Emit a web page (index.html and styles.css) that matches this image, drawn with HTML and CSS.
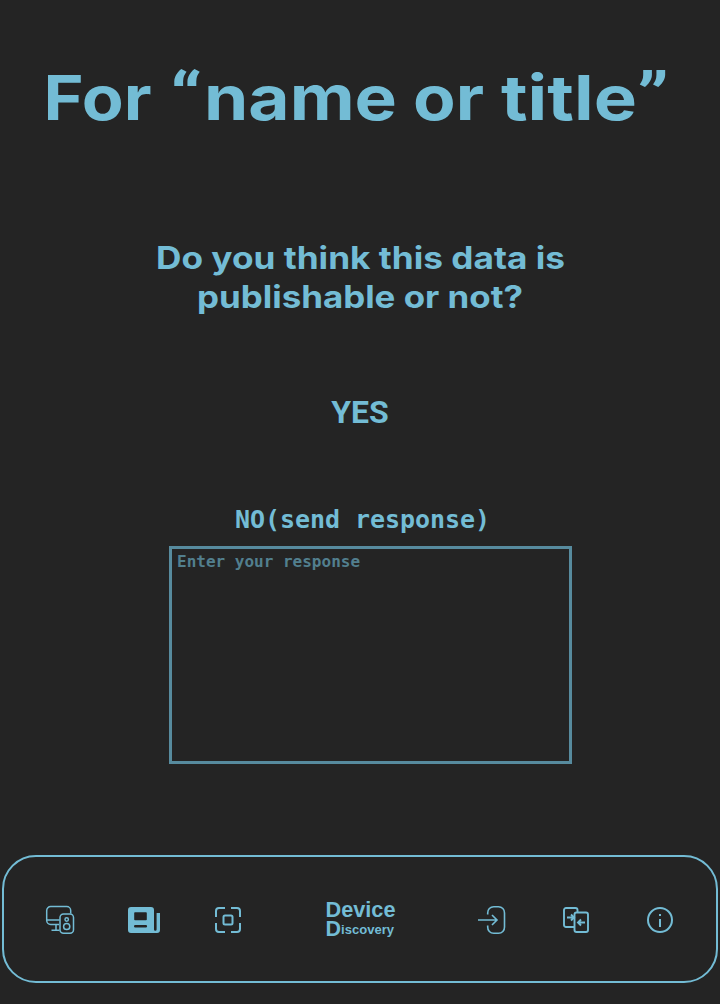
FILE: index.html
```
<!DOCTYPE html>
<html lang="en">
<head>
<meta charset="utf-8">
<title>Device Discovery</title>
<link rel="stylesheet" href="styles.css">
</head>
<body>
<main class="page">
  <h1 class="title">
    <svg class="fit" width="720" height="110"><text y="80"><tspan x="43.500" textLength="108" lengthAdjust="spacingAndGlyphs">For</tspan> <tspan class="quote" x="170" textLength="32" lengthAdjust="spacingAndGlyphs">“</tspan><tspan x="204" textLength="193" lengthAdjust="spacingAndGlyphs">name</tspan> <tspan x="413" textLength="71" lengthAdjust="spacingAndGlyphs">or</tspan> <tspan x="501" textLength="136" lengthAdjust="spacingAndGlyphs">title</tspan><tspan class="quote" x="637" textLength="32" lengthAdjust="spacingAndGlyphs">”</tspan></text></svg>
  </h1>
  <h2 class="question">
    <svg class="fit" width="720" height="80">
      <text x="156" y="29" textLength="409" lengthAdjust="spacingAndGlyphs">Do you think this data is</text>
      <text x="197" y="68" textLength="326" lengthAdjust="spacingAndGlyphs">publishable or not?</text>
    </svg>
  </h2>
  <button class="yes">YES</button>
  <label class="no" for="response">NO(send response)</label>
  <textarea class="response" id="response" placeholder="Enter your response"></textarea>
  <nav class="bar">
    <a class="item devices"><svg width="30" height="30" viewBox="0 0 30 30" stroke-width="1.500">
      <path d="M14 19.500H5.700a4 4 0 0 1-4-4V5.500a4 4 0 0 1 4-4h16a4 4 0 0 1 4 4v3M1.700 15h13M11 19.500v5M6.500 25.300h8"/>
      <rect x="15" y="9" width="13.500" height="19.300" rx="3.500"/>
      <circle cx="21.700" cy="14.500" r="1.700"/><circle cx="21.700" cy="21.500" r="3.100"/>
    </svg></a>
    <a class="item news"><svg width="32" height="26" viewBox="0 0 32 26">
      <path class="solid" fill-rule="evenodd" d="M3 0h20a3 3 0 0 1 3 3v19.500a1.300 1.300 0 0 0 2.600 0V6H32v17a3 3 0 0 1-3 3H3a3 3 0 0 1-3-3V3a3 3 0 0 1 3-3zM7 5.300a.8.8 0 0 0-.8.8v6.400a.8.8 0 0 0 .8.8h11a.8.8 0 0 0 .8-.8V6.100a.8.8 0 0 0-.8-.8zM7.300 18a1.300 1.300 0 0 0 0 2.600h10.500a1.300 1.300 0 0 0 0-2.600z"/>
    </svg></a>
    <a class="item scan"><svg width="26" height="26" viewBox="0 0 26 26" stroke-width="2">
      <path d="M1 10V4a3 3 0 0 1 3-3h6M16 1h6a3 3 0 0 1 3 3v6M25 16v6a3 3 0 0 1-3 3h-6M10 25H4a3 3 0 0 1-3-3v-6"/>
      <rect x="8.500" y="8.500" width="9" height="9" rx="1.500"/>
    </svg></a>
    <a class="logo"><svg width="76" height="50">
      <text x="3.500" y="22.200" font-size="21.500" textLength="70" lengthAdjust="spacingAndGlyphs">Device</text>
      <text x="3.500" y="41" font-size="21.500">D</text>
      <text x="19" y="39" font-size="13" textLength="53" lengthAdjust="spacingAndGlyphs">iscovery</text>
    </svg></a>
    <a class="item login"><svg width="30" height="30" viewBox="0 0 30 30" stroke-width="1.600">
      <path d="M10.700 9.500V8a6 6 0 0 1 6-6.300h4.800a6 6 0 0 1 6 6.300v14a6 6 0 0 1-6 6.300h-4.800a6 6 0 0 1-6-6.300v-1.500M1 15h19M15 10l5 5-5 5"/>
    </svg></a>
    <a class="item swap"><svg width="26" height="26" viewBox="0 0 26 26" stroke-width="1.900">
      <path d="M11.500 20H3a2 2 0 0 1-2-2V3a2 2 0 0 1 2-2h9.500a2 2 0 0 1 2 2v2.500"/>
      <rect x="11.500" y="5.500" width="13.500" height="19.500" rx="2"/>
      <path d="M4 10.500h6.500M8 7.500l3 3-3 3M22 15.500h-7M18 12.500l-3 3 3 3"/>
    </svg></a>
    <a class="item info"><svg width="26" height="26" viewBox="0 0 26 26" stroke-width="2">
      <circle cx="13" cy="13" r="12"/><path d="M13 12v8M13 7v2"/>
    </svg></a>
  </nav>
</main>
</body>
</html>
```
FILE: styles.css
```
* { box-sizing: border-box; }
body { margin: 0; background: #242424; color: #73bcd5; }
.page {
  width: 720px;
  height: 1004px;
  padding-top: 40px;
  display: flex;
  flex-direction: column;
  align-items: center;
}
.fit { display: block; fill: currentColor; font-family: Inter, sans-serif; font-weight: 700; }
.title { margin: 0; font-size: 62px; }
.quote { font-family: Roboto, sans-serif; font-weight: 700; font-size: 66px; }
.question { margin: 90px 0 0; font-size: 31px; }
.no, .response { font-family: "DejaVu Sans Mono", monospace; font-weight: 700; color: inherit; }
.yes {
  height: 40px;
  margin-top: 72px;
  padding: 0;
  border: 0;
  background: none;
  color: inherit;
  font: 700 32px/40px Roboto, sans-serif;
}
.no { margin: 73px 0 0 5px; height: 30px; font-size: 25px; line-height: 30px; letter-spacing: -0.05px; }
.response {
  width: 403px;
  height: 218px;
  margin: 11px 0 0 21px;
  padding: 3px 5px;
  border: 3px solid #578b9e;
  border-radius: 0;
  background: transparent;
  font-size: 16px;
  line-height: 19px;
  resize: none;
  outline: none;
}
.response::placeholder { color: #527f8e; opacity: 1; }
.bar {
  width: 716px;
  height: 128px;
  margin-top: 91px;
  padding-top: 2px;
  border: 2px solid #73bcd5;
  border-radius: 34px;
  display: grid;
  grid-template-columns: 80px 88px 80px 184px 80px 88px 80px;
  justify-content: center;
  align-items: center;
}
.item, .logo { display: grid; place-items: center; }
.bar svg { display: block; fill: none; stroke: currentColor; overflow: visible; }
.bar .solid { fill: currentColor; stroke: none; }
.logo svg { fill: currentColor; stroke: none; font-family: "Liberation Sans", sans-serif; font-weight: 700; }
```
